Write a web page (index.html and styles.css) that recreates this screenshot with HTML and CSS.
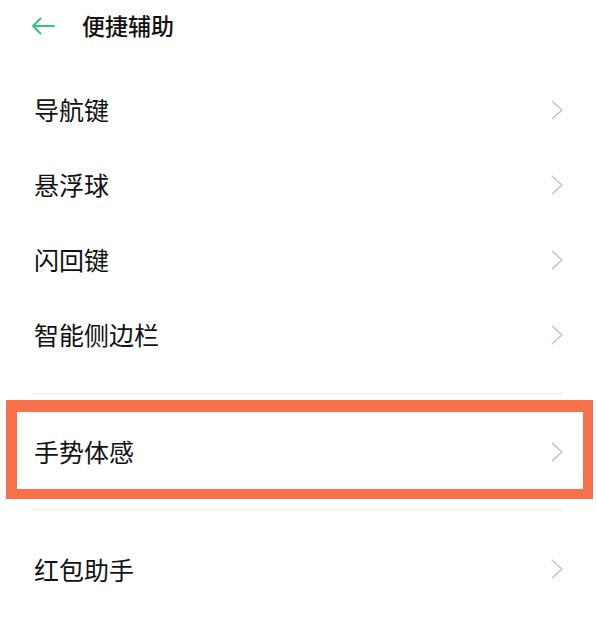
FILE: index.html
```html
<!DOCTYPE html>
<html lang="zh">
<head>
<meta charset="utf-8">
<link rel="stylesheet" href="styles.css">
</head>
<body>
<header class="topbar">
  <svg class="back" width="24" height="18" viewBox="0 0 24 18"><path d="M23 9H2M9.5 1.5L2 9l7.5 7.5" fill="none" stroke="#35c47e" stroke-width="2" stroke-linecap="round" stroke-linejoin="round"/></svg>
  <h1 class="title">便捷辅助</h1>
</header>
<main>
  <section class="group top">
    <div class="row"><span>导航键</span><svg class="chev" width="12" height="20" viewBox="0 0 12 20"><path d="M1 1l10 9-10 9" fill="none" stroke="#c2c2c2" stroke-width="1.5"/></svg></div>
    <div class="row"><span>悬浮球</span><svg class="chev" width="12" height="20" viewBox="0 0 12 20"><path d="M1 1l10 9-10 9" fill="none" stroke="#c2c2c2" stroke-width="1.5"/></svg></div>
    <div class="row"><span>闪回键</span><svg class="chev" width="12" height="20" viewBox="0 0 12 20"><path d="M1 1l10 9-10 9" fill="none" stroke="#c2c2c2" stroke-width="1.5"/></svg></div>
    <div class="row"><span>智能侧边栏</span><svg class="chev" width="12" height="20" viewBox="0 0 12 20"><path d="M1 1l10 9-10 9" fill="none" stroke="#c2c2c2" stroke-width="1.5"/></svg></div>
  </section>
  <hr class="divider first">
  <div class="highlight">
    <div class="row inner"><span>手势体感</span><svg class="chev" width="12" height="20" viewBox="0 0 12 20"><path d="M1 1l10 9-10 9" fill="none" stroke="#c2c2c2" stroke-width="1.5"/></svg></div>
  </div>
  <hr class="divider second">
  <section class="group">
    <div class="row"><span>红包助手</span><svg class="chev" width="12" height="20" viewBox="0 0 12 20"><path d="M1 1l10 9-10 9" fill="none" stroke="#c2c2c2" stroke-width="1.5"/></svg></div>
  </section>
</main>
</body>
</html>
```
FILE: styles.css
```css
html, body {
  margin: 0;
  padding: 0;
  background: #ffffff;
  width: 596px;
  height: 623px;
  overflow: hidden;
  font-family: "Noto Sans CJK SC", "Noto Sans", sans-serif;
  color: #111111;
}
.topbar {
  height: 50px;
  display: flex;
  align-items: center;
  padding-left: 31px;
}
.back {
  display: block;
  margin-right: 27px;
  margin-top: 2px;
}
.title {
  margin: 0;
  font-size: 23px;
  font-weight: 500;
  line-height: 1;
}
main {
  padding-top: 22px;
}
.row {
  height: 76px;
  display: flex;
  align-items: center;
  justify-content: space-between;
  padding: 0 33px 0 34px;
  font-size: 25px;
  line-height: 1;
}
.group.top .row {
  height: 75px;
}
.chev {
  display: block;
}
.divider {
  border: 0;
  height: 1px;
  background: #ebebeb;
  margin: 0 33px;
}
.divider.first {
  margin-top: 21px;
}
.highlight {
  margin: 6px 3px 0 6px;
  border-style: solid;
  border-color: #f7714a;
  border-width: 12px 10px 10px 11px;
}
.row.inner {
  height: 77px;
  padding: 2px 20px 0 17px;
  box-sizing: border-box;
}
.divider.second {
  margin-top: 10px;
}
.divider.second + .group {
  margin-top: 21px;
}
```
